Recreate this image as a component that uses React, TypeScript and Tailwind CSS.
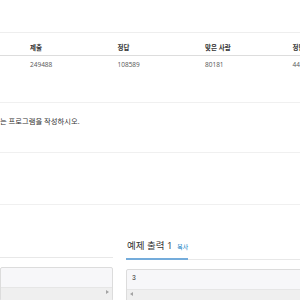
const font = "font-['Open_Sans','Noto_Sans_CJK_KR',sans-serif]";

function Cell({ children, bold }: { children: React.ReactNode; bold?: boolean }) {
  return (
    <div
      className={`w-[87.5px] shrink-0 px-[4px] text-[6.5px] leading-[9px] whitespace-nowrap ${
        bold ? "font-bold text-[#333]" : "text-[#555]"
      }`}
    >
      {children}
    </div>
  );
}

function Arrow({ dir }: { dir: "left" | "right" }) {
  return (
    <svg width="3" height="4" viewBox="0 0 3 4" className="block">
      {dir === "left" ? (
        <path d="M3 0 L0 2 L3 4 Z" fill="#a3a3a3" />
      ) : (
        <path d="M0 0 L3 2 L0 4 Z" fill="#a3a3a3" />
      )}
    </svg>
  );
}

function SampleBox({ text, arrow }: { text?: string; arrow: "left" | "right" }) {
  return (
    <div className="mt-[9px] border border-[#dcdcdc] bg-[#f7f7f9] rounded-[2px] overflow-hidden">
      <pre className="px-[5px] pt-[4px] pb-[5px] text-[6.5px] leading-[9px] text-[#333] font-['Liberation_Mono',monospace] h-[19px]">
        {text}
      </pre>
      <div
        className={`h-[13px] bg-[#efefef] border-t border-[#e6e6e6] flex items-start pt-[2px] px-[3px] ${
          arrow === "left" ? "justify-start" : "justify-end"
        }`}
      >
        <Arrow dir={arrow} />
      </div>
    </div>
  );
}

export default function App() {
  return (
    <div className={`w-[300px] h-[300px] overflow-hidden bg-white ${font}`}>
      <div className="h-[32px]" />

      {/* 통계 테이블 */}
      <div className="border-t border-[#eeeeee]">
        <div className="h-[23px] flex items-end pb-[3px] border-b border-[#dddddd]">
          <div className="w-[26px] shrink-0" />
          <Cell bold>제출</Cell>
          <Cell bold>정답</Cell>
          <Cell bold>맞은 사람</Cell>
          <Cell bold>정답 비율</Cell>
        </div>
        <div className="flex py-[4px]">
          <div className="w-[26px] shrink-0" />
          <Cell>249488</Cell>
          <Cell>108589</Cell>
          <Cell>80181</Cell>
          <Cell>44.123%</Cell>
        </div>
      </div>

      <div className="h-[29px]" />
      <div className="h-px bg-[#f0f0f0]" />
      <p className="mt-[13px] text-[7.3px] leading-[10px] text-[#333] whitespace-nowrap">
        는 프로그램을 작성하시오.
      </p>
      <div className="h-[26px]" />
      <div className="h-px bg-[#f0f0f0]" />
      <div className="h-[51px]" />
      <div className="h-px bg-[#f0f0f0]" />

      {/* 예제 */}
      <div className="mt-[34px] flex gap-[13px]">
        <div className="w-[113px] shrink-0">
          <div className="h-[19px] border-b border-[#e8e8e8]" />
          <SampleBox arrow="right" />
        </div>
        <div className="w-[200px] shrink-0">
          <div className="border-b border-[#e8e8e8] flex">
            <div className="-mb-px pb-[4px] border-b-2 border-[#74acdb] flex items-baseline whitespace-nowrap">
              <span className="text-[9.5px] leading-[13px] text-[#333] pl-px">예제 출력 1</span>
              <span className="ml-[5px] text-[5.8px] leading-[13px] text-[#0076c0]">복사</span>
            </div>
          </div>
          <SampleBox text="3" arrow="left" />
        </div>
      </div>
    </div>
  );
}
